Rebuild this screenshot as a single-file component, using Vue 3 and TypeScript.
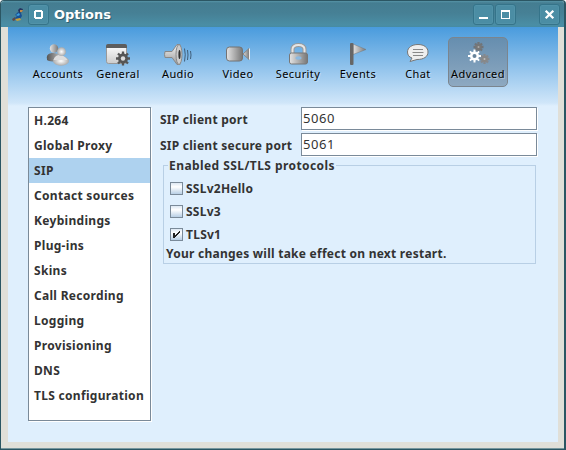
<script setup lang="ts">
import { ref } from 'vue'

interface Tool { id: string; label: string }
interface Protocol { name: string; on: boolean }

const tools: Tool[] = ['Accounts', 'General', 'Audio', 'Video', 'Security', 'Events', 'Chat', 'Advanced']
  .map((label) => ({ id: label.toLowerCase(), label }))
const activeTool = ref('advanced')

const sections: string[] = ['H.264', 'Global Proxy', 'SIP', 'Contact sources', 'Keybindings', 'Plug-ins',
  'Skins', 'Call Recording', 'Logging', 'Provisioning', 'DNS', 'TLS configuration']
const activeSection = ref('SIP')

const port = ref('5060')
const securePort = ref('5061')
const protocols = ref<Protocol[]>([
  { name: 'SSLv2Hello', on: false },
  { name: 'SSLv3', on: false },
  { name: 'TLSv1', on: true },
])
</script>

<template>
  <div class="window">
    <header class="titlebar">
      <svg class="logo" width="14" height="16" viewBox="0 0 14 16">
        <path d="M1 12 4 10 5 13 2 14Z" fill="#5b4a4a" />
        <path d="M4 8 7 5 10 6 11 9 9 12 5 13 4 11 6 9Z" fill="#174f94" />
        <path d="M5 8 8 6 9 8 7 9Z" fill="#3fa0dc" />
        <path d="M7 3 9 1 12 2 11 5 8 6Z" fill="#26345e" />
        <path d="M9 3 12 3 11 5 9 5Z" fill="#c18a4a" />
        <path d="M4 12 9 11 10 13 6 14Z" fill="#c5a13c" />
      </svg>
      <button class="tb-btn">
        <svg width="19" height="19" viewBox="0 0 19 19"><path d="M6 5h7v1h1v7h-1v1H6v-1H5V6h1zM7 7v5h5V7z" fill="#fff" fill-rule="evenodd" /></svg>
      </button>
      <h1>Options</h1>
      <div class="controls">
        <button class="tb-btn"><svg width="19" height="19" viewBox="0 0 19 19"><path d="M5 12h9v2H5z" fill="#fff" /></svg></button>
        <button class="tb-btn"><svg width="19" height="19" viewBox="0 0 19 19"><path d="M5 5h9v9H5zM6 7v6h7V7z" fill="#fff" fill-rule="evenodd" /></svg></button>
        <button class="tb-btn close"><svg width="19" height="19" viewBox="0 0 19 19"><path d="M5.700 5.700 13.300 13.300M13.300 5.700 5.700 13.300" stroke="#fff" stroke-width="2.300" /></svg></button>
      </div>
    </header>

    <main class="content">
      <nav class="toolbar">
        <button v-for="t in tools" :key="t.id" class="tool" :class="{ active: t.id === activeTool }" @click="activeTool = t.id">
          <svg width="32" height="26" viewBox="0 0 32 26">
            <defs>
              <linearGradient id="metal" x1="0" y1="0" x2="1" y2="0"><stop offset="0" stop-color="#e4e4e4" /><stop offset="1" stop-color="#777" /></linearGradient>
              <linearGradient id="metalV" x1="0" y1="0" x2="0" y2="1"><stop offset="0" stop-color="#f5f5f5" /><stop offset="1" stop-color="#999" /></linearGradient>
              <linearGradient id="paper" x1="0" y1="0" x2="0" y2="1"><stop offset="0" stop-color="#fff" /><stop offset="1" stop-color="#ccc" /></linearGradient>
              <linearGradient id="dark" x1="0" y1="0" x2="1" y2="0"><stop offset="0" stop-color="#555" /><stop offset="1" stop-color="#bbb" /></linearGradient>
              <radialGradient id="ball"><stop offset="0" stop-color="#fff" /><stop offset="1" stop-color="#aaa" /></radialGradient>
            </defs>
            <g v-if="t.id === 'accounts'">
              <path d="M5 17c-1-4 2-6 6-6 5 0 8 3 7 6-3 3-11 3-13 1Z" fill="url(#dark)" />
              <circle cx="12" cy="6.500" r="4.200" fill="url(#metal)" />
              <ellipse cx="19" cy="19" rx="8" ry="4.700" fill="url(#ball)" />
              <path d="M11.500 18c1-4 4-5 6.500-5s6 2 7.500 5Z" fill="#ddd" />
              <circle cx="19.500" cy="9.700" r="4.400" fill="url(#ball)" />
            </g>
            <g v-else-if="t.id === 'general'">
              <rect x="4.500" y="2.500" width="20" height="19" rx="2" fill="url(#paper)" stroke="#999" />
              <path d="M4 6V4q0-2 2-2h17q2 0 2 2v2Z" fill="#5d5d5d" />
              <circle cx="21" cy="16.500" r="5" fill="#555" /><path d="M21 9.500v14M14 16.500h14M16 11.500l10 10M26 11.500l-10 10" stroke="#555" stroke-width="2.300" />
              <circle cx="21" cy="16.500" r="2.200" fill="#ddd" />
            </g>
            <g v-else-if="t.id === 'audio'">
              <path d="M3 9.500q-1 3 0 6h7l5 7h3V2.500h-3l-5 7Z" fill="url(#metalV)" stroke="#888" />
              <ellipse cx="17" cy="12.500" rx="3" ry="10" fill="#ccc" stroke="#888" /><ellipse cx="17.500" cy="12.500" rx="1.100" ry="4.500" fill="#333" />
              <path d="M22.500 6.500q1.500 6 0 13M25.500 8q1 5 0 10M28.500 9q1 4 0 8" stroke="#405f7b" fill="none" />
            </g>
            <g v-else-if="t.id === 'video'">
              <rect x="4.500" y="5" width="16" height="14" rx="3" fill="url(#metal)" stroke="#737373" />
              <path d="M21 12 27 6.500v11Z" fill="url(#metal)" stroke="#888" /><path d="M27.500 6.500v11" stroke="#eee" />
            </g>
            <g v-else-if="t.id === 'security'">
              <path d="M10.500 13V7.500q0-4.500 6-4.500t6 4.500V13" stroke="#999" stroke-width="4" fill="none" />
              <path d="M10.500 13V7.500q0-4.500 6-4.500t6 4.500V13" stroke="#e5e5e5" stroke-width="2" fill="none" />
              <rect x="7.500" y="11" width="18" height="11" rx="2" fill="url(#metal)" stroke="#777" /><ellipse cx="16.500" cy="16" rx="3" ry="1.700" fill="#8bb9e1" />
            </g>
            <g v-else-if="t.id === 'events'">
              <path d="M11 2 24 7.500 11 12.500Z" fill="url(#metal)" stroke="#777" stroke-width=".5" /><rect x="8" y="1" width="3.500" height="22" rx="1" fill="#666" />
            </g>
            <g v-else-if="t.id === 'chat'">
              <path d="M16 2.500c6 0 10 3 10 7.500s-4 7.500-11 7.500L8 19.500l2-3.500C7 15 5.500 13 5.500 10 5.500 5.500 10 2.500 16 2.500Z" fill="#eee" stroke="#777" />
              <path d="M11 7.500h10M10.500 10.500h11M11 13.500h10" stroke="#888" />
            </g>
            <g v-else>
              <g transform="translate(16.500 5)"><path d="M0-5V5M-5 0H5M-3.500-3.500 3.500 3.500M3.500-3.500-3.500 3.500" stroke="#707479" stroke-width="2.300" /><circle r="3" fill="#777" /><circle r="1" fill="#aaa" /></g>
              <g transform="translate(22.500 17)"><path d="M0-5V5M-5 0H5M-3.500-3.500 3.500 3.500M3.500-3.500-3.500 3.500" stroke="#85898e" stroke-width="2.300" /><circle r="3" fill="#888" /><circle r="1" fill="#bbb" /></g>
              <g transform="translate(12.500 14)"><path d="M0-6.500V6.500M-6.500 0H6.500M-4.600-4.600 4.600 4.600M4.600-4.600-4.600 4.600" stroke="#fff" stroke-width="2" /><circle r="4.500" fill="#fff" /><circle r="2" fill="#69849b" /></g>
            </g>
          </svg>
          <span>{{ t.label }}</span>
        </button>
      </nav>

      <div class="body">
        <ul class="sections">
          <li v-for="s in sections" :key="s" :class="{ selected: s === activeSection }" @click="activeSection = s">{{ s }}</li>
        </ul>
        <form class="form" @submit.prevent>
          <label class="field"><span>SIP client port</span><input v-model="port" type="text" /></label>
          <label class="field"><span>SIP client secure port</span><input v-model="securePort" type="text" /></label>
          <fieldset>
            <legend>Enabled SSL/TLS protocols</legend>
            <label v-for="p in protocols" :key="p.name" class="check">
              <input v-model="p.on" type="checkbox" />
              <span class="box"><svg v-if="p.on" width="11" height="11" viewBox="0 0 11 11"><path d="M2 4h2v2h1V5h1V4h1V3h1V2h1v2H8v1H7v1H6v1H5v1H4v1H2Z" fill="#222" /></svg></span>
              <span>{{ p.name }}</span>
            </label>
            <p>Your changes will take effect on next restart.</p>
          </fieldset>
        </form>
      </div>
    </main>
  </div>
</template>

<style>
body { margin: 0; background: #fff; overflow: hidden; }
</style>

<style scoped>
* { box-sizing: border-box; }
button { border: 0; padding: 0; background: none; font: inherit; }
.window {
  width: 566px; height: 450px; display: flex; flex-direction: column;
  border: 1px solid #2b5663; border-right-width: 2px; border-radius: 4px 4px 0 0;
  background: #e0dfd8; overflow: hidden;
  font: bold 12px/15px "Noto Sans", "Open Sans", sans-serif; color: #333;
}
.titlebar {
  flex: none; height: 26px; padding: 1px 4px 0 10px; display: flex; align-items: center;
  background: linear-gradient(#5694a6 0, #447d91 2px, #468095 12px, #4a8ea5 24px, #468ba3);
}
.tb-btn {
  width: 21px; height: 21px; display: grid; place-items: center; border: 1px solid #35748a;
  border-radius: 3px; background: #4b8da4; box-shadow: inset 0 0 0 1px #5192a8;
}
.logo { margin-right: 3px; }
.titlebar h1 { margin: 0 0 0 5px; font: bold 13px/20px "DejaVu Sans", sans-serif; color: #fff; text-shadow: 1px 1px #315f70; }
.controls { margin-left: auto; display: flex; gap: 1px; }
.close { margin-left: 22px; }
.content {
  flex: 1; margin: 0 6px 6px 7px;
  background: linear-gradient(#499bdd 0, #d0e6f9 76px, #dfeffd 79px);
}
.window::after { content: ""; flex: none; height: 1px; background: #77969d; }
.toolbar { display: flex; padding: 10px 0 0 20px; }
.tool {
  width: 60px; height: 50px; padding-top: 4px; display: flex; flex-direction: column; align-items: center;
  border: 1px solid transparent; border-radius: 5px;
  font: 11px/14px "Noto Sans", sans-serif; color: #000; letter-spacing: .4px;
}
.tool svg { flex: none; }
.tool span { margin-top: -1px; white-space: nowrap; text-shadow: 1px 1px rgba(255, 255, 255, .35); }
.tool.active { border-color: #7b858e; background: linear-gradient(#668eaf, #8ea9c1); }
.body { display: flex; align-items: flex-start; gap: 9px; padding: 20px 20px 0; }
.sections {
  width: 123px; height: 314px; margin: 0; padding: 0; list-style: none; flex: none;
  border: 1px solid #7a8a99; background: #fff; box-shadow: 1px 1px #fff;
}
.sections li { height: 25px; padding: 5px 0 0 5px; white-space: nowrap; letter-spacing: .3px; }
.sections li.selected { background: #aed2ef; }
.form { width: 377px; flex: none; letter-spacing: .25px; }
.field { display: flex; align-items: center; height: 23px; margin-bottom: 3px; }
.field span { width: 141px; white-space: nowrap; padding-top: 1px; letter-spacing: .25px; }
.field input {
  width: 236px; height: 23px; padding: 0 1px 1px; border: 1px solid #7a8a99; border-radius: 0; outline: 0;
  background: #fff; box-shadow: 1px 1px #fff; color: #333; font: 13px/20px "Noto Sans", sans-serif; letter-spacing: .6px;
}
fieldset { width: 373px; height: 106px; margin: -1px 0 0 3px; padding: 4px 2px 0; border: 1px solid #b8cfe5; }
legend { margin-left: 2px; padding: 0 1px; height: 15px; white-space: nowrap; letter-spacing: .43px; }
.check { display: flex; align-items: center; height: 23px; padding-left: 4px; gap: 3px; }
.check input { position: absolute; opacity: 0; }
.box { width: 13px; height: 13px; border: 1px solid #7a8a99; background: linear-gradient(#dde8f3, #fff 35%, #b8cfe5); }
.box svg { display: block; }
p { margin: 0; white-space: nowrap; }
</style>
